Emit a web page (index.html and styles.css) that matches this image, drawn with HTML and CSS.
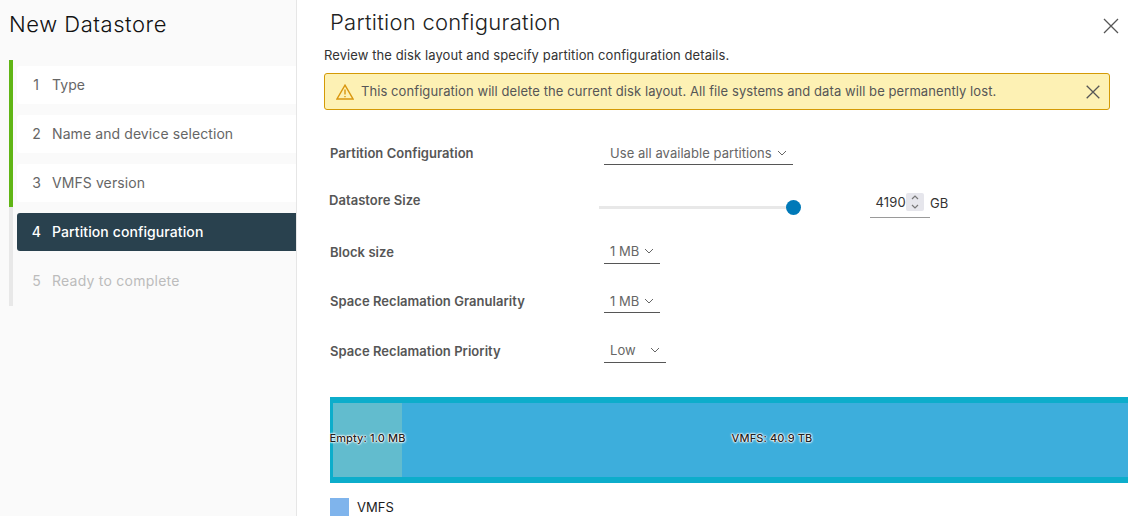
FILE: index.html
```html
<!DOCTYPE html>
<html lang="en">
<head>
<meta charset="utf-8">
<title>New Datastore</title>
<link rel="stylesheet" href="styles.css">
</head>
<body>
<div class="wizard">
  <aside class="sidebar">
    <h1 class="wizard-title">New Datastore</h1>
    <ol class="steps">
      <li class="step done"><div class="step-box"><span class="num">1</span><span>Type</span></div></li>
      <li class="step done"><div class="step-box"><span class="num">2</span><span>Name and device selection</span></div></li>
      <li class="step done"><div class="step-box"><span class="num">3</span><span>VMFS version</span></div></li>
      <li class="step active"><div class="step-box"><span class="num">4</span><span>Partition configuration</span></div></li>
      <li class="step todo"><div class="step-box"><span class="num">5</span><span>Ready to complete</span></div></li>
    </ol>
  </aside>
  <main class="content">
    <header class="head">
      <h2 class="page-title">Partition configuration</h2>
      <svg class="close" viewBox="0 0 16 16" width="16" height="16"><path d="M1 1l14 14M15 1L1 15"/></svg>
    </header>
    <p class="intro">Review the disk layout and specify partition configuration details.</p>
    <div class="alert">
      <svg class="warn" viewBox="0 0 18 16" width="18" height="16"><path d="M9 1.2 17 15H1z"/><path d="M9 5.5v5M9 12v1.3"/></svg>
      <span class="alert-text">This configuration will delete the current disk layout. All file systems and data will be permanently lost.</span>
      <svg class="alert-close" viewBox="0 0 14 14" width="14" height="14"><path d="M.7.7l12.6 12.6M13.3.7.7 13.3"/></svg>
    </div>
    <div class="form">
      <div class="row row-a">
        <label class="label">Partition Configuration</label>
        <div class="select sel-wide"><span>Use all available partitions</span><svg class="chev" viewBox="0 0 10 6" width="10" height="6"><path d="M1 1l4 4 4-4"/></svg></div>
      </div>
      <div class="row row-b">
        <label class="label label-size">Datastore Size</label>
        <div class="slider"><div class="thumb"></div></div>
        <div class="number">
          <span class="value">4190</span>
          <span class="spin"><svg viewBox="0 0 10 18" width="10" height="18"><path d="M2 6l3-3 3 3M2 12l3 3 3-3"/></svg></span>
        </div>
        <span class="unit">GB</span>
      </div>
      <div class="row row-c">
        <label class="label">Block size</label>
        <div class="select sel-mb"><span>1 MB</span><svg class="chev" viewBox="0 0 10 6" width="10" height="6"><path d="M1 1l4 4 4-4"/></svg></div>
      </div>
      <div class="row row-c">
        <label class="label">Space Reclamation Granularity</label>
        <div class="select sel-mb"><span>1 MB</span><svg class="chev" viewBox="0 0 10 6" width="10" height="6"><path d="M1 1l4 4 4-4"/></svg></div>
      </div>
      <div class="row row-c">
        <label class="label">Space Reclamation Priority</label>
        <div class="select sel-low"><span>Low</span><svg class="chev" viewBox="0 0 10 6" width="10" height="6"><path d="M1 1l4 4 4-4"/></svg></div>
      </div>
    </div>
    <div class="disk">
      <div class="part empty"><span class="part-label">Empty: 1.0 MB</span></div>
      <div class="part vmfs"><span class="part-label">VMFS: 40.9 TB</span></div>
    </div>
    <div class="legend"><span class="swatch"></span><span>VMFS</span></div>
  </main>
</div>
</body>
</html>
```
FILE: styles.css
```css
* { box-sizing: border-box; }
html, body { margin: 0; height: 100%; background: #fff; overflow: hidden; }
body { font-family: "Inter", "Liberation Sans", sans-serif; color: #565656; }
.wizard { display: flex; height: 516px; }
.sidebar { width: 297px; flex: none; background: #fafafa; border-right: 1px solid #e6e6e6; padding: 9px 0 0 9px; }
.wizard-title { margin: 0; font-size: 22px; line-height: 30px; font-weight: 300; letter-spacing: .54px; color: #111; }
.steps { list-style: none; margin: 21px 0 0; padding: 0; }
.step { border-left: 4px solid #e8e8e8; padding: 0 0 0 4px; height: 49px; }
.step:first-child { height: 55px; padding-top: 6px; }
.step:last-child { height: 44px; }
.step.done { border-left-color: #60b515; }
.step.done:nth-child(3) { height: 43px; }
.step.active { height: 55px; padding-top: 6px; border-left-color: #e8e8e8; }
.step-box { height: 38px; display: flex; align-items: center; padding-bottom: 2px; background: #fff; font-size: 14px; letter-spacing: .09px; border-radius: 3px 0 0 3px; color: #666; }
.num { width: 35px; text-align: right; padding-right: 12px; flex: none; }
.step:first-child .num { padding-right: 13px; }
.step.active .step-box { background: #29414e; color: #fff; font-weight: 500; letter-spacing: .1px; }
.step.active .num, .step:nth-child(2) .num, .step:nth-child(3) .num, .step:nth-child(5) .num { padding-right: 11px; }
.step.todo .step-box { background: transparent; color: #bcbcbc; letter-spacing: .24px; }
.content { flex: 1; min-width: 0; padding: 0 8px 0 27px; }
.head { height: 45px; display: flex; align-items: flex-start; justify-content: space-between; padding: 7px 9px 0 6px; }
.page-title { margin: 0; font-size: 22px; line-height: 30px; font-weight: 300; letter-spacing: .27px; color: #222; }
.close { margin-top: 11px; fill: none; stroke: #565656; stroke-width: 1.3; }
.intro { margin: 0; font-size: 13px; line-height: 20px; letter-spacing: .09px; color: #333; }
.alert { margin-top: 8px; height: 37px; display: flex; align-items: center; background: #fdf1b4; border: 1px solid #d49a06; border-radius: 3px; padding: 0 9px 0 11px; font-size: 13px; letter-spacing: .075px; color: #565656; width: 786px; }
.warn { fill: none; stroke: #d9960f; stroke-width: 1.4; flex: none; }
.alert-text { margin-left: 7px; flex: 1; padding-bottom: 2px; }
.alert-close { fill: none; stroke: #565656; stroke-width: 1.3; flex: none; }
.form { margin-top: 0; padding-left: 6px; }
.row { display: flex; align-items: center; }
.row-a { height: 50px; margin-top: 18px; }
.row-b { height: 49px; }
.row-c { height: 49.5px; }
.label { width: 274px; flex: none; font-size: 13px; font-weight: 600; letter-spacing: .04px; color: #565656; }
.label-size { margin-left: -1px; width: 270px; margin-top: -6px; }
.select { display: flex; align-items: center; justify-content: space-between; height: 24px; border-bottom: 1px solid #565656; padding: 0 6px; font-size: 13px; letter-spacing: .05px; color: #666; }
.chev { fill: none; stroke: #666; stroke-width: 1; flex: none; }
.sel-wide { width: 189px; }
.sel-mb { width: 56px; }
.sel-low { width: 62px; }
.slider { width: 197px; height: 3px; background: #e8e8e8; position: relative; margin-top: 10px; flex: none; }
.thumb { position: absolute; right: -5px; top: -6px; width: 15px; height: 15px; border-radius: 50%; background: #0079b8; }
.number { margin-left: 74px; width: 60px; height: 25px; display: flex; align-items: flex-start; justify-content: flex-end; padding-right: 6px; border-bottom: 1px solid #9a9a9a; margin-top: 6px; font-size: 13px; letter-spacing: .2px; color: #333; }
.value { margin-right: 0; line-height: 18px; }
.spin { width: 18px; height: 18px; background: #e6e6ec; display: block; border-radius: 2px; }
.spin svg { display: block; margin: 0 auto; fill: none; stroke: #777; stroke-width: 1.2; }
.unit { margin-left: 0; margin-top: 1px; font-size: 13px; color: #333; }
.disk { margin: 21.5px 0 0 6px; height: 86px; width: 798px; display: flex; background: #0dadcb; padding: 6px 0 6px 3px; }
.part { height: 100%; display: flex; align-items: center; justify-content: center; white-space: nowrap; padding-bottom: 5px; }
.part-label { position: relative; z-index: 1; font-size: 11px; font-weight: 500; letter-spacing: .12px; color: #222; text-shadow: 0 0 1px #fff, 0 0 1px #fff, 0 0 2px #fff, 0 0 2px #fff, 0 0 3px #fff; }
.empty { width: 69px; background: #62bcce; }
.vmfs { flex: 1; background: #3daedc; padding-left: 14px; }
.legend { margin: 15px 0 0 6px; display: flex; align-items: center; gap: 8px; font-size: 13px; color: #1b1b1b; }
.swatch { width: 19px; height: 18px; background: #7fb4ec; }
```
